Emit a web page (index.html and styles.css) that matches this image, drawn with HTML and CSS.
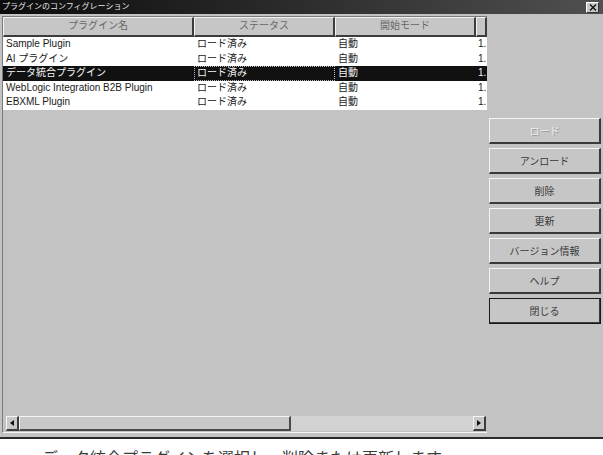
FILE: index.html
```html
<!DOCTYPE html>
<html lang="ja">
<head>
<meta charset="utf-8">
<title>プラグインのコンフィグレーション</title>
<link rel="stylesheet" href="styles.css">
</head>
<body>
<div class="dialog">
  <div class="titlebar">
    <span class="title">プラグインのコンフィグレーション</span>
    <span class="close">
      <svg width="8" height="7" viewBox="0 0 8 7"><path d="M1 0.5L7 6.5M7 0.5L1 6.5" stroke="#111" stroke-width="1.4"/></svg>
    </span>
  </div>
  <div class="body">
    <div class="listview">
      <div class="header">
        <div class="hcell c1">プラグイン名</div>
        <div class="hcell c2">ステータス</div>
        <div class="hcell c3">開始モード</div>
        <div class="hcell c4"></div>
      </div>
      <div class="rows">
        <div class="row"><span class="c1">Sample Plugin</span><span class="c2">ロード済み</span><span class="c3">自動</span><span class="c4">1.</span></div>
        <div class="row"><span class="c1">AI プラグイン</span><span class="c2">ロード済み</span><span class="c3">自動</span><span class="c4">1.</span></div>
        <div class="row selected"><span class="c1">データ統合プラグイン</span><span class="c2">ロード済み</span><span class="c3">自動</span><span class="c4">1.</span></div>
        <div class="row"><span class="c1">WebLogic Integration B2B Plugin</span><span class="c2">ロード済み</span><span class="c3">自動</span><span class="c4">1.</span></div>
        <div class="row"><span class="c1">EBXML Plugin</span><span class="c2">ロード済み</span><span class="c3">自動</span><span class="c4">1.</span></div>
      </div>
      <div class="hscroll">
        <div class="arrow">
          <svg width="4" height="6" viewBox="0 0 4 6"><path d="M4 0L0 3L4 6Z" fill="#111"/></svg>
        </div>
        <div class="thumb"></div>
        <div class="track"></div>
        <div class="arrow">
          <svg width="4" height="6" viewBox="0 0 4 6"><path d="M0 0L4 3L0 6Z" fill="#111"/></svg>
        </div>
      </div>
    </div>
    <div class="buttons">
      <button class="btn disabled">ロード</button>
      <button class="btn">アンロード</button>
      <button class="btn">削除</button>
      <button class="btn">更新</button>
      <button class="btn">バージョン情報</button>
      <button class="btn">ヘルプ</button>
      <button class="btn default">閉じる</button>
    </div>
  </div>
</div>
<p class="caption">データ統合プラグインを選択し、削除または更新します</p>
</body>
</html>
```
FILE: styles.css
```css
* { box-sizing: border-box; }

html, body {
  margin: 0;
  padding: 0;
  background: #ffffff;
  width: 603px;
  height: 455px;
  overflow: hidden;
  font-family: "Liberation Sans", "Noto Sans CJK JP", sans-serif;
}

.dialog {
  width: 603px;
  height: 439px;
  background: #c3c3c3;
  border-bottom: 2px solid #2a2a2a;
  display: flex;
  flex-direction: column;
}

.titlebar {
  height: 14px;
  flex: none;
  background: linear-gradient(to right, #0c0c0c 0%, #262626 40%, #505050 100%);
  display: flex;
  align-items: center;
  justify-content: space-between;
  padding: 0 4px 0 2px;
}

.title {
  color: #e8e8e8;
  font-size: 8px;
  line-height: 14px;
  white-space: nowrap;
}

.close {
  width: 13px;
  height: 11px;
  background: #c8c8c8;
  border-top: 1px solid #fff;
  border-left: 1px solid #fff;
  border-right: 1px solid #333;
  border-bottom: 1px solid #333;
  display: flex;
  align-items: center;
  justify-content: center;
}

.body {
  flex: 1;
  display: flex;
  padding: 2px 3px 4px 2px;
  gap: 2px;
}

.listview {
  width: 485px;
  flex: none;
  display: flex;
  flex-direction: column;
  border-left: 1px solid #7a7a7a;
  border-top: 1px solid #7a7a7a;
  border-bottom: 1px solid #f4f4f4;
}

.header {
  display: flex;
  height: 20px;
  flex: none;
}

.hcell {
  background: #c6c6c6;
  border-top: 1px solid #f2f2f2;
  border-left: 1px solid #f2f2f2;
  border-right: 2px solid #3c3c3c;
  border-bottom: 2px solid #3c3c3c;
  color: #666666;
  font-size: 10px;
  line-height: 16px;
  text-align: center;
  white-space: nowrap;
}

.c1 { width: 191px; }
.c2 { width: 141px; }
.c3 { width: 141px; }
.c4 { width: 11px; }

.rows {
  flex: 1;
}

.row {
  display: flex;
  height: 14.6px;
  background: #ffffff;
  color: #1a1a1a;
  font-size: 10px;
  line-height: 14.6px;
  white-space: nowrap;
}

.row span {
  overflow: hidden;
  padding-left: 3px;
}

.row .c4 { padding-left: 2px; }

.row.selected {
  background: #111111;
  color: #f4f4f4;
}

.row.selected .c2 {
  outline: 1px dotted #bbb;
  outline-offset: -1px;
}

.hscroll {
  height: 15px;
  flex: none;
  display: flex;
  margin: 0 1px 1px 3px;
}

.arrow {
  width: 13px;
  background: #c8c8c8;
  border-top: 1px solid #f4f4f4;
  border-left: 1px solid #f4f4f4;
  border-right: 2px solid #3c3c3c;
  border-bottom: 2px solid #3c3c3c;
  display: flex;
  align-items: center;
  justify-content: center;
}

.thumb {
  width: 272px;
  background: #c8c8c8;
  border-top: 1px solid #f4f4f4;
  border-left: 1px solid #f4f4f4;
  border-right: 2px solid #4a4a4a;
  border-bottom: 2px solid #4a4a4a;
}

.track {
  flex: 1;
  background: #d2d2d2;
}

.buttons {
  flex: 1;
  display: flex;
  flex-direction: column;
  gap: 4px;
  padding-top: 102px;
}

.btn {
  height: 26px;
  width: 112px;
  margin: 0;
  padding: 0;
  background: #c6c6c6;
  border-top: 1px solid #f4f4f4;
  border-left: 1px solid #f4f4f4;
  border-right: 2px solid #3a3a3a;
  border-bottom: 2px solid #3a3a3a;
  color: #3a3a3a;
  font-family: "Liberation Sans", "Noto Sans CJK JP", sans-serif;
  font-size: 10px;
  text-align: center;
}

.btn.disabled {
  color: #eeeeee;
  text-shadow: 1px 1px 0 #9a9a9a;
}

.btn.default {
  outline: 1px solid #1a1a1a;
  outline-offset: -1px;
}

.caption {
  margin: 0;
  padding: 8px 0 0 42px;
  font-family: "Noto Sans CJK JP", sans-serif;
  font-size: 16px;
  line-height: 20px;
  color: #3a3a3a;
  white-space: nowrap;
}
```
